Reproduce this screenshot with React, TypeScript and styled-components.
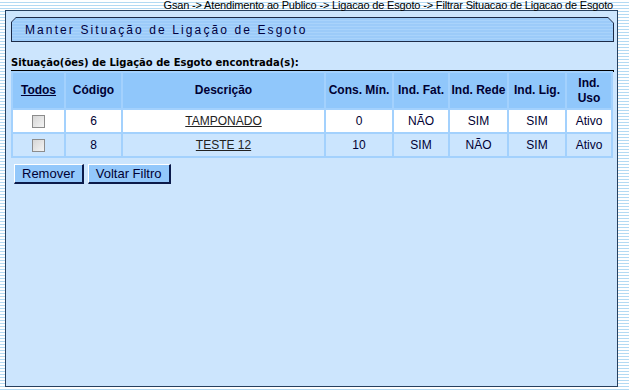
import { createGlobalStyle, styled } from "styled-components";

const GlobalStyle = createGlobalStyle`
  html, body {
    margin: 0;
    padding: 0;
  }
  body {
    background: repeating-linear-gradient(
      to bottom,
      #ffffff 0px,
      #ffffff 2px,
      #b3daf3 2px,
      #b3daf3 3px
    );
    font-family: Arial, "Liberation Sans", sans-serif;
    min-height: 392px;
  }
`;

const Page = styled.div`
  width: 629px;
  height: 392px;
  overflow: hidden;
`;

const Breadcrumb = styled.div`
  width: 613px;
  height: 10px;
  line-height: 10px;
  font-size: 11px;
  letter-spacing: -0.17px;
  color: #000;
  text-align: right;
  white-space: nowrap;
`;

const Panel = styled.div`
  box-sizing: border-box;
  margin-left: 5px;
  width: 613px;
  height: 377px;
  background: #cce5fd;
  border: 1px solid #26405f;
  padding: 6px 3px 0 5px;
`;

const TitleFrame = styled.div`
  height: 25px;
  box-sizing: border-box;
  padding: 1px;
  background: #1c2b48;
  clip-path: polygon(5px 0, calc(100% - 6px) 0, 100% 6px, 100% 100%, 0 100%, 0 5px);
`;

const TitleFill = styled.div`
  height: 100%;
  display: flex;
  align-items: center;
  padding-left: 13px;
  background: repeating-linear-gradient(
    to bottom,
    #9ccbf9 0px,
    #9ccbf9 2px,
    #a9d3fb 2px,
    #a9d3fb 3px
  );
  clip-path: polygon(4px 0, calc(100% - 5px) 0, 100% 5px, 100% 100%, 0 100%, 0 4px);
  font-size: 12px;
  letter-spacing: 2.1px;
  color: #000040;
`;

const Subtitle = styled.div`
  margin-top: 15px;
  font-family: "DejaVu Sans", Verdana, sans-serif;
  font-weight: bold;
  font-size: 10px;
  letter-spacing: 0;
  color: #000;
  line-height: 12px;
`;

const Rule = styled.div`
  height: 2px;
  background: #000;
  margin-top: 1px;
`;

const Table = styled.table`
  width: 602px;
  border-collapse: separate;
  border-spacing: 2px;
  margin-top: -1px;
  background: #a3d1fd;
  table-layout: fixed;
`;

const HeadCell = styled.th<{ $w: number }>`
  width: ${(p) => p.$w}px;
  height: 35px;
  padding: 0;
  background: #90c7fb;
  font-size: 12px;
  font-weight: bold;
  color: #000033;
  text-align: center;
  vertical-align: middle;
  line-height: 15px;
`;

const HeadLink = styled.span`
  text-decoration: underline;
`;

const Row = styled.tr<{ $alt?: boolean }>`
  background: ${(p) => (p.$alt ? "#cbe5fe" : "#ffffff")};
`;

const Cell = styled.td`
  height: 22px;
  padding: 0;
  font-size: 12px;
  color: #000033;
  text-align: center;
  vertical-align: middle;
`;

const RowLink = styled.a`
  color: #222;
  text-decoration: underline;
`;

const Check = styled.input`
  appearance: none;
  width: 13px;
  height: 13px;
  margin: 0;
  vertical-align: middle;
  border: 1px solid #8c8c8c;
  background: linear-gradient(135deg, #d6d6d6 0%, #f4f4f4 100%);
  box-sizing: border-box;
`;

const Buttons = styled.div`
  display: flex;
  gap: 4px;
  margin-top: 6px;
  margin-left: 3px;
`;

const Button = styled.button`
  height: 20px;
  box-sizing: border-box;
  padding: 0 7px;
  background: #93c8fb;
  border-style: solid;
  border-width: 1px 2px 2px 1px;
  border-color: #ffffff #0b1a4a #0b1a4a #ffffff;
  font-family: Arial, "Liberation Sans", sans-serif;
  font-size: 13px;
  color: #000033;
  line-height: 16px;
`;

const columns = [
  { label: "Todos", w: 51 },
  { label: "Código", w: 55 },
  { label: "Descrição", w: 201 },
  { label: "Cons. Mín.", w: 66 },
  { label: "Ind. Fat.", w: 54 },
  { label: "Ind. Rede", w: 57 },
  { label: "Ind. Lig.", w: 56 },
  { label: "Ind. Uso", w: 44 },
];

const rows = [
  { codigo: "6", descricao: "TAMPONADO", cons: "0", fat: "NÃO", rede: "SIM", lig: "SIM", uso: "Ativo" },
  { codigo: "8", descricao: "TESTE 12", cons: "10", fat: "SIM", rede: "NÃO", lig: "SIM", uso: "Ativo" },
];

export default function App() {
  return (
    <Page>
      <GlobalStyle />
      <Breadcrumb>
        Gsan -&gt; Atendimento ao Publico -&gt; Ligacao de Esgoto -&gt; Filtrar Situacao de Ligacao de Esgoto
      </Breadcrumb>
      <Panel>
        <TitleFrame>
          <TitleFill>Manter Situação de Ligação de Esgoto</TitleFill>
        </TitleFrame>
        <Subtitle>Situação(ões) de Ligação de Esgoto encontrada(s):</Subtitle>
        <Rule />
        <Table>
          <thead>
            <tr>
              {columns.map((c, i) => (
                <HeadCell key={c.label} $w={c.w}>
                  {i === 0 ? <HeadLink>{c.label}</HeadLink> : c.label}
                </HeadCell>
              ))}
            </tr>
          </thead>
          <tbody>
            {rows.map((r, i) => (
              <Row key={r.codigo} $alt={i % 2 === 1}>
                <Cell>
                  <Check type="checkbox" />
                </Cell>
                <Cell>{r.codigo}</Cell>
                <Cell>
                  <RowLink href="#">{r.descricao}</RowLink>
                </Cell>
                <Cell>{r.cons}</Cell>
                <Cell>{r.fat}</Cell>
                <Cell>{r.rede}</Cell>
                <Cell>{r.lig}</Cell>
                <Cell>{r.uso}</Cell>
              </Row>
            ))}
          </tbody>
        </Table>
        <Buttons>
          <Button>Remover</Button>
          <Button>Voltar Filtro</Button>
        </Buttons>
      </Panel>
    </Page>
  );
}
